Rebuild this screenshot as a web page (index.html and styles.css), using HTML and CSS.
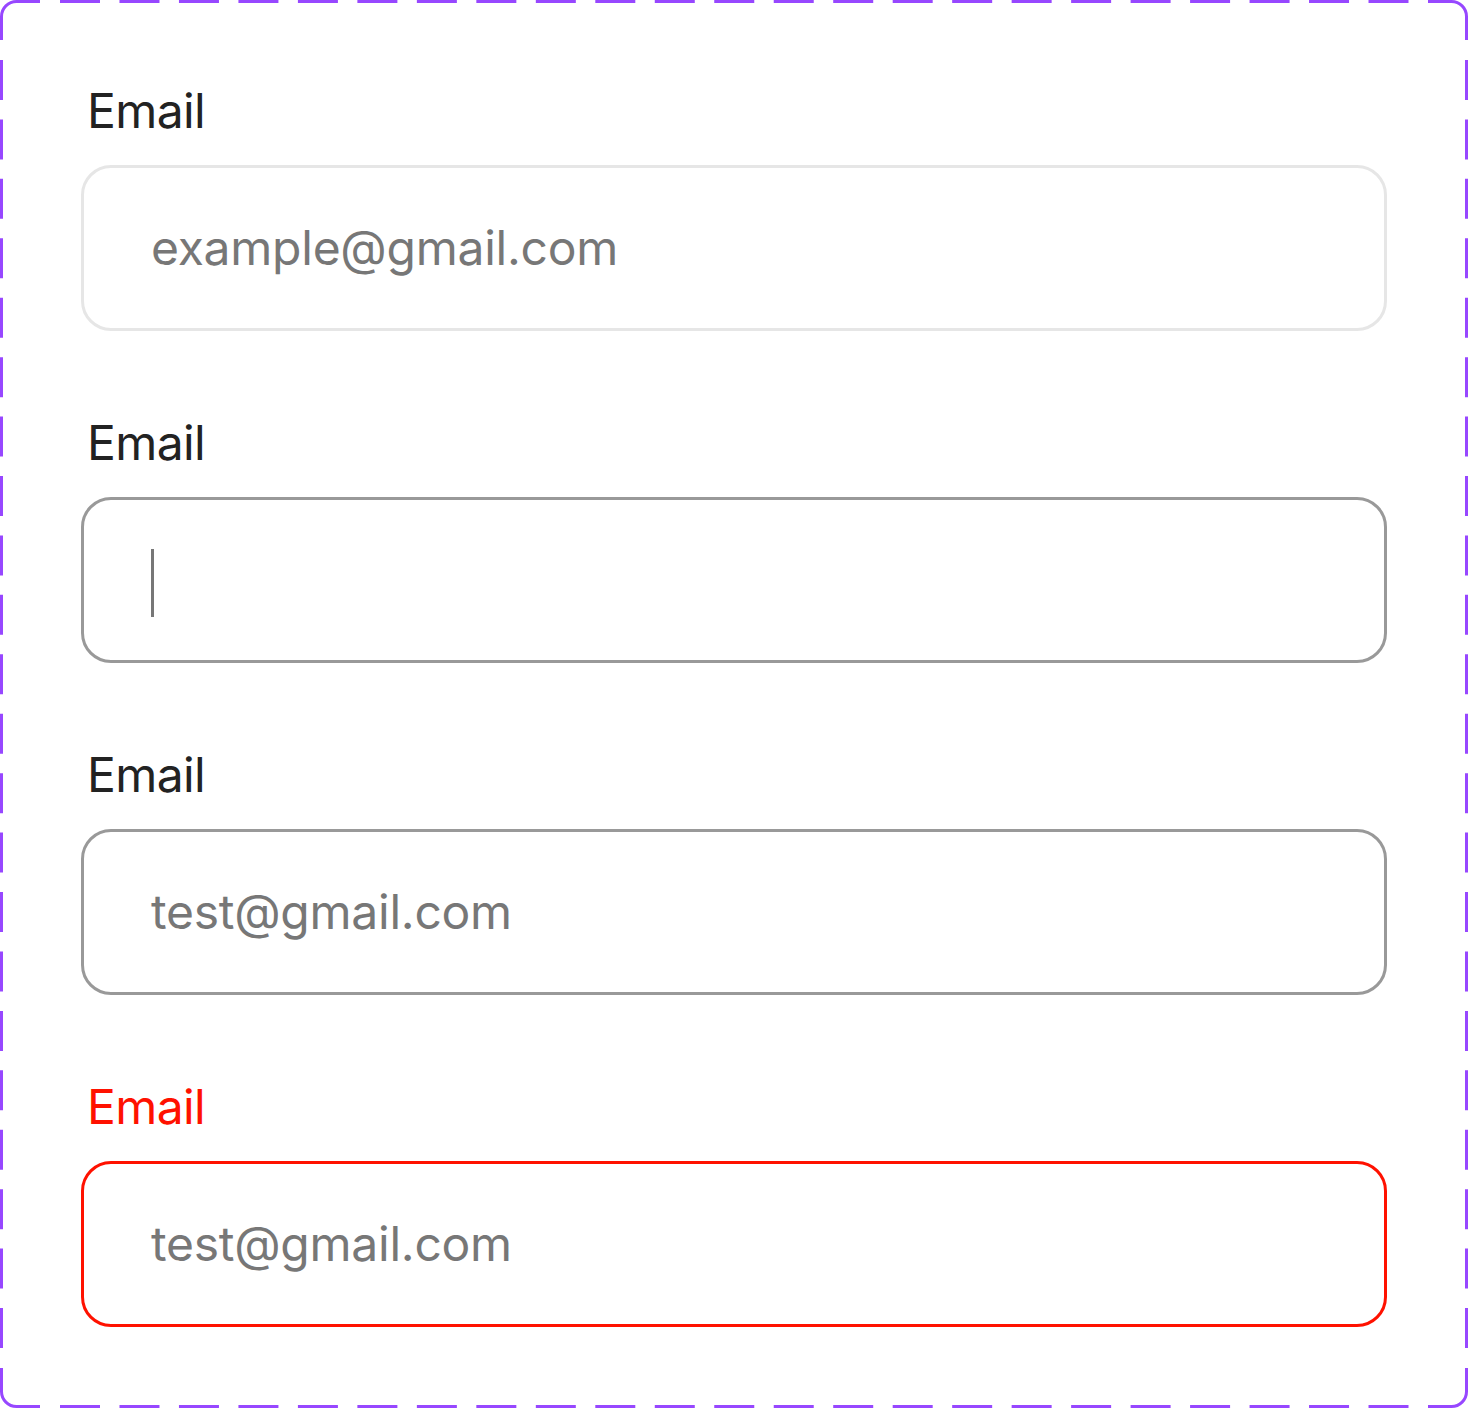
FILE: index.html
```html
<!DOCTYPE html>
<html lang="en">
<head>
    <meta charset="UTF-8">
    <meta name="viewport" content="width=device-width, initial-scale=1.0">
    <title>Email field states</title>
    <link rel="stylesheet" href="styles.css">
</head>
<body>
    <div class="frame">
        <!-- dashed outline of the component set: solid corners, evenly spread dashes on the sides -->
        <svg class="frame-outline" width="1468" height="1408" viewBox="0 0 1468 1408"
             fill="none" stroke="#9747ff" stroke-width="3">
            <path d="M1.5 40 V16.5 A15 15 0 0 1 16.5 1.5 H40"/>
            <path d="M1428 1.5 H1451.5 A15 15 0 0 1 1466.5 16.5 V40"/>
            <path d="M1466.5 1368 V1391.5 A15 15 0 0 1 1451.5 1406.5 H1428"/>
            <path d="M40 1406.5 H16.5 A15 15 0 0 1 1.5 1391.5 V1368"/>
            <path d="M60 1.5 H1408.5" stroke-dasharray="40 19.478"/>
            <path d="M60 1406.5 H1408.5" stroke-dasharray="40 19.478"/>
            <path d="M1.5 60 V1348" stroke-dasharray="40 19.43"/>
            <path d="M1466.5 60 V1348" stroke-dasharray="40 19.43"/>
        </svg>

        <div class="field-group">
            <label class="field-label">Email</label>
            <div class="field field-default">
                <span class="field-text">example@gmail.com</span>
            </div>
        </div>

        <div class="field-group">
            <label class="field-label">Email</label>
            <div class="field field-active">
                <span class="caret"></span>
            </div>
        </div>

        <div class="field-group">
            <label class="field-label">Email</label>
            <div class="field field-active">
                <span class="field-text">test@gmail.com</span>
            </div>
        </div>

        <div class="field-group error">
            <label class="field-label">Email</label>
            <div class="field field-error">
                <span class="field-text">test@gmail.com</span>
            </div>
        </div>
    </div>
</body>
</html>
```

FILE: styles.css
```css
body {
    margin: 0;
    background-color: #fff;
    font-family: Inter, "Noto Sans", sans-serif;
}
.frame {
    position: relative;
    box-sizing: border-box;
    width: 1468px;
    height: 1408px;
    padding: 82px 81px;
    display: flex;
    flex-direction: column;
    gap: 83px;
}
.frame-outline {
    position: absolute;
    top: 0;
    left: 0;
    pointer-events: none;
}
.field-group {
    display: flex;
    flex-direction: column;
}
.field-label {
    display: block;
    padding-left: 6px;
    margin-bottom: 25px;
    font-size: 48px;
    line-height: 58px;
    letter-spacing: -0.6px;
    color: #222;
}
.field {
    box-sizing: border-box;
    height: 166px;
    padding: 0 0 0 67px;
    border: 3px solid #e6e6e6;
    border-radius: 30px;
    display: flex;
    align-items: center;
}
.field-text {
    font-size: 48px;
    line-height: 58px;
    letter-spacing: -0.25px;
    color: #777;
}
.field-active {
    border-color: #999;
}
.field-error {
    border-color: #ff1100;
}
.error .field-label {
    color: #ff1100;
}
.caret {
    display: block;
    width: 3px;
    height: 68px;
    margin-top: 6px;
    background-color: #777;
}
```
